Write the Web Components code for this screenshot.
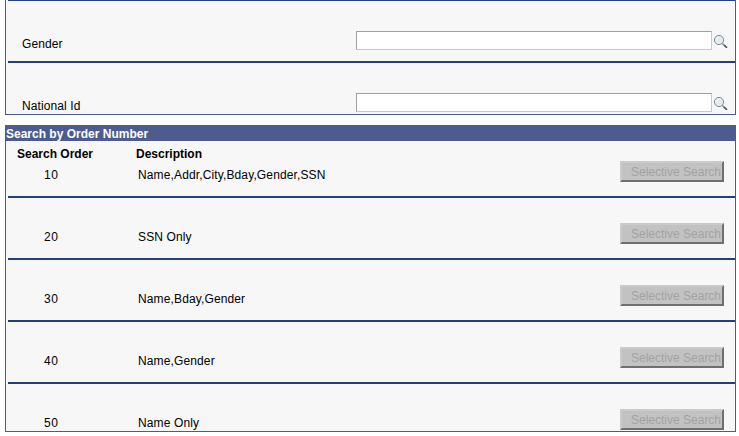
<!DOCTYPE html>
<html>
<head>
<meta charset="utf-8">
<title>Search</title>
<style>
  html, body { margin: 0; background: #fff; overflow: hidden; }
  body { font: 12px "Liberation Sans", Arial, sans-serif; color: #000; }
</style>
</head>
<body>
<field-panel>
  <field-row label="Gender"></field-row>
  <field-row label="National Id" last></field-row>
</field-panel>
<order-panel title-text="Search by Order Number">
  <order-row num="10" desc="Name,Addr,City,Bday,Gender,SSN" first></order-row>
  <order-row num="20" desc="SSN Only"></order-row>
  <order-row num="30" desc="Name,Bday,Gender"></order-row>
  <order-row num="40" desc="Name,Gender"></order-row>
  <order-row num="50" desc="Name Only" last></order-row>
</order-panel>
<script>
class LookupIcon extends HTMLElement {
  connectedCallback() {
    this.attachShadow({ mode: 'open' });
    this.shadowRoot.innerHTML = `
      <style>:host { display: block; width: 14px; height: 14px; } svg { display: block; }</style>
      <svg width="14" height="14" viewBox="0 0 14 14">
        <circle cx="5" cy="6" r="4.6" fill="#e2ebf1" stroke="#808a8c" stroke-width="1"/>
        <path d="M2.6 5.6a2.6 2.6 0 0 1 2.2-2.2" fill="none" stroke="#fff" stroke-width="1"/>
        <path d="M8.4 9.4l1.4 1.4" stroke="#8a8a8a" stroke-width="1.4"/>
        <path d="M9.8 10.8l3.2 3" stroke="#555" stroke-width="1.7"/>
      </svg>`;
  }
}
customElements.define('lookup-icon', LookupIcon);

class FieldPanel extends HTMLElement {
  connectedCallback() {
    this.attachShadow({ mode: 'open' });
    this.shadowRoot.innerHTML = `
      <style>
        :host { display: block; box-sizing: border-box; width: 731px; height: 115px; margin-left: 5px;
          background: #f7f7f7; border: 1px solid #4d5c8c; border-top: 0; overflow: hidden; }
        .top { height: 1px; margin-left: 2px; background: #24407a; }
      </style>
      <div class="top"></div>
      <slot></slot>`;
  }
}
customElements.define('field-panel', FieldPanel);

class FieldRow extends HTMLElement {
  connectedCallback() {
    this.attachShadow({ mode: 'open' });
    const last = this.hasAttribute('last');
    this.shadowRoot.innerHTML = `
      <style>
        :host { display: grid; grid-template-columns: 348px 356px 16px; align-items: end;
          box-sizing: border-box; height: ${last ? 51 : 62}px; margin-left: 2px; padding-bottom: ${last ? 2 : 11}px;
          border-bottom: ${last ? 0 : 2}px solid #24407a; }
        .label { padding-left: 14px; line-height: 14px; letter-spacing: .1px; margin-bottom: -1px; }
        .input { box-sizing: border-box; height: 19px; background: #fff; border: 1px solid #c8c8c8; border-top-color: #a0a0a0; border-left-color: #a0a0a0; }
        lookup-icon { margin: 0 0 2px 2px; }
      </style>
      <div class="label">${this.getAttribute('label')}</div>
      <div class="input"></div>
      <lookup-icon></lookup-icon>`;
  }
}
customElements.define('field-row', FieldRow);

class OrderPanel extends HTMLElement {
  connectedCallback() {
    this.attachShadow({ mode: 'open' });
    this.shadowRoot.innerHTML = `
      <style>
        :host { display: block; box-sizing: border-box; width: 731px; height: 307px; margin: 10px 0 0 5px;
          background: #f7f7f7; border: 1px solid #4d5c8c; border-top: 0; overflow: hidden; }
        .title { height: 16px; margin: 0 -1px; padding-left: 1px; background: #4d5c8c; color: #fff;
          font-weight: bold; line-height: 18px; }
        .cols { display: flex; height: 19px; padding-top: 5px; box-sizing: border-box; font-weight: bold; line-height: 16px; }
        .cols span:first-child { width: 120px; padding-left: 11px; box-sizing: border-box; }
        .cols span:last-child { margin-left: 10px; }
      </style>
      <div class="title">${this.getAttribute('title-text')}</div>
      <div class="cols"><span>Search Order</span><span>Description</span></div>
      <slot></slot>`;
  }
}
customElements.define('order-panel', OrderPanel);

class OrderRow extends HTMLElement {
  connectedCallback() {
    this.attachShadow({ mode: 'open' });
    const first = this.hasAttribute('first');
    const last = this.hasAttribute('last');
    this.shadowRoot.innerHTML = `
      <style>
        :host { display: grid; grid-template-columns: 130px 1fr 104px 11px; align-items: end; box-sizing: border-box;
          height: ${first ? 38 : last ? 47 : 62}px; margin-left: 2px; padding-bottom: ${last ? 1 : 14}px;
          border-bottom: ${last ? 0 : 2}px solid #24407a; }
        .num { padding-left: 36px; letter-spacing: .7px; line-height: 14px; }
        .desc { letter-spacing: .13px; line-height: 14px; }
        .btn { box-sizing: border-box; height: 21px; background: #c2c2c2; color: #a2a2a2; font-size: 12px;
          border: 2px solid; border-color: #cbcbcb #6f6f6f #6f6f6f #cbcbcb; line-height: 18px; padding-left: 9px;
          white-space: nowrap; overflow: hidden; }
      </style>
      <div class="num">${this.getAttribute('num')}</div>
      <div class="desc">${this.getAttribute('desc')}</div>
      <div class="btn">Selective Search</div>
      <div></div>`;
  }
}
customElements.define('order-row', OrderRow);
</script>
</body>
</html>
